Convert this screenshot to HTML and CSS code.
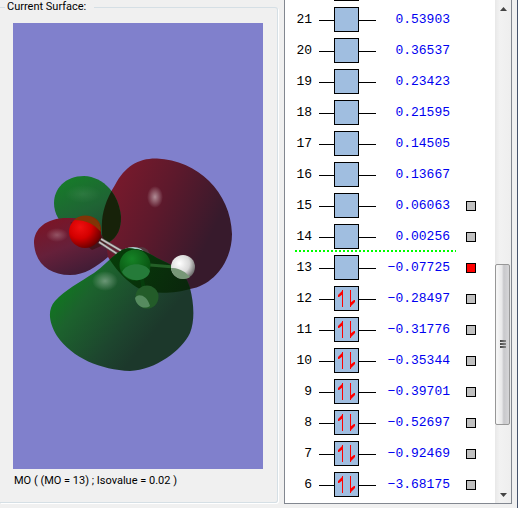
FILE: index.html
```html
<!DOCTYPE html>
<html lang="en">
<head>
    <meta charset="UTF-8">
    <meta name="viewport" content="width=device-width, initial-scale=1.0">
    <title>MO Editor</title>
    <link rel="stylesheet" href="styles.css">
</head>
<body>
    <svg class="defs" width="0" height="0" aria-hidden="true">
        <symbol id="empty" viewBox="0 0 57 25">
            <path d="M0 13.5H15M40 13.5H57" stroke="#000"/>
            <rect x="15.5" y=".5" width="24" height="24" fill="#a0bee0" stroke="#000"/>
        </symbol>
        <symbol id="filled" viewBox="0 0 57 25">
            <use href="#empty"/>
            <path d="M23.5 4V21M31.5 4V21" stroke="#f00"/>
            <path d="M24 4L19 9V11H20L24 8ZM31 21L36 16V14H35L31 17Z" fill="#f00"/>
        </symbol>
    </svg>

    <fieldset class="surface">
        <legend>Current Surface:</legend>
        <svg class="view" viewBox="13 23 250 446" role="img" aria-label="Orbital surface">
            <defs>
                <linearGradient id="bigRed" x1="0" y1="0" x2="1" y2=".5">
                    <stop offset="0" stop-color="#821a2c"/>
                    <stop offset=".5" stop-color="#5d192c"/>
                    <stop offset=".9" stop-color="#371a2c"/>
                </linearGradient>
                <linearGradient id="smallRed" x1=".2" y1="0" x2=".7" y2="1">
                    <stop offset="0" stop-color="#7c1425"/>
                    <stop offset=".5" stop-color="#66203a"/>
                    <stop offset="1" stop-color="#3d1c35"/>
                </linearGradient>
                <linearGradient id="smallGreen" x1=".2" y1="0" x2=".7" y2="1">
                    <stop offset="0" stop-color="#167c29"/>
                    <stop offset=".5" stop-color="#1f6434"/>
                    <stop offset="1" stop-color="#204631"/>
                </linearGradient>
                <linearGradient id="bigGreen" x1=".1" y1=".2" x2=".75" y2=".65">
                    <stop offset="0" stop-color="#0d7c1c"/>
                    <stop offset=".3" stop-color="#1c622d"/>
                    <stop offset=".75" stop-color="#1d452e"/>
                    <stop offset="1" stop-color="#1c382b"/>
                </linearGradient>
                <linearGradient id="overlap" x1="0" y1="0" x2="1" y2=".5">
                    <stop offset="0" stop-color="#007000"/>
                    <stop offset=".35" stop-color="#063d08"/>
                    <stop offset="1" stop-color="#0b220d"/>
                </linearGradient>
                <radialGradient id="oxygen" cx=".35" cy=".35" r=".7">
                    <stop offset="0" stop-color="#f01010"/>
                    <stop offset=".5" stop-color="#d40000"/>
                    <stop offset="1" stop-color="#680000"/>
                </radialGradient>
                <radialGradient id="hydrogen" cx=".35" cy=".35" r=".7">
                    <stop offset="0" stop-color="#fff"/>
                    <stop offset=".6" stop-color="#d8d8d8"/>
                    <stop offset="1" stop-color="#6c6c6c"/>
                </radialGradient>
                <radialGradient id="carbon" cx=".4" cy=".3" r=".7">
                    <stop offset="0" stop-color="#168326"/>
                    <stop offset="1" stop-color="#075010"/>
                </radialGradient>
                <radialGradient id="shine">
                    <stop offset="0" stop-color="#fff" stop-opacity=".5"/>
                    <stop offset="1" stop-color="#fff" stop-opacity="0"/>
                </radialGradient>
                <path id="redLobe" d="M157 158.500C139 158 125 166 115 185C105 201 101 216 102 230C102 242 104 251 108 257C118 273 134 290 150 292C165 294 180 292 190 289C214 285 232 261 232 234C231 192 197 160 157 158.500Z"/>
                <path id="greenSmallLobe" d="M84 176C65 176 54 189 54 203C54 214 60 223 70 232C82 241 96 249 108 243C118 237 121 228 121 217C119 194 104 177 84 176Z"/>
                <path id="redSmallLobe" d="M70 218C47 217 34 228 34 243C35 263 49 275 70 275C85 275 96 267 108 257C107 246 103 232 92 224C84 219 77 218 70 218Z"/>
                <path id="greenLobe" d="M122 250C112 256 105 265 94 273C80 282 65 290 55 301C47 310 49 323 57 336C72 358 101 370 130 371C156 370 182 350 190 333C195 320 194 304 190 288C187 276 178 267 157 258C147 252 140 249 135 249C130 248 126 248 122 250Z"/>
                <clipPath id="inRed"><use href="#redLobe"/></clipPath>
                <clipPath id="inSmallRed"><use href="#redSmallLobe"/></clipPath>
            </defs>
            <rect x="13" y="23" width="250" height="446" fill="#8080cc"/>

            <!-- upper lobes -->
            <use href="#redLobe" fill="url(#bigRed)"/>
            <ellipse cx="155" cy="197" rx="8" ry="11" fill="url(#shine)"/>
            <use href="#greenSmallLobe" fill="url(#smallGreen)"/>
            <use href="#greenSmallLobe" fill="#172209" clip-path="url(#inRed)"/>
            <ellipse cx="83" cy="194" rx="18" ry="9" fill="url(#shine)" opacity=".15"/>
            <use href="#redSmallLobe" fill="url(#smallRed)"/>
            <ellipse cx="57" cy="235" rx="11" ry="7" fill="url(#shine)" opacity=".5"/>
            <g clip-path="url(#inSmallRed)">
                <path d="M84 218L121 218L118 234L108 243L92 250L70 232Z" fill="#3a1010" opacity=".7"/>
            </g>
            <circle cx="88" cy="229" r="13" fill="#773407"/>
            <path d="M70 223C86 218 103 233 106 249C100 240 96 231 88 227Z" fill="#500b08"/>
            <circle cx="85" cy="232" r="16" fill="url(#oxygen)"/>
            <path d="M74 220A16 16 0 0 1 101 232C94 224 86 220 74 220Z" fill="#813406"/>

            <!-- bond to the ring atom -->
            <path d="M101 239L125 253M99 242L122 257" stroke="#555" stroke-width="3"/>
            <path d="M101 239L125 253M99 242L122 257" stroke="#c8c0c0" stroke-width="1.500"/>
            <circle cx="141" cy="256" r="9" fill="#54393f"/>
            <ellipse cx="133" cy="253" rx="11" ry="6" fill="#a8c8c8"/>

            <!-- lower lobe -->
            <use href="#greenLobe" fill="url(#bigGreen)"/>
            <use href="#greenLobe" fill="url(#overlap)" clip-path="url(#inRed)"/>
            <ellipse cx="105" cy="281" rx="13" ry="10" fill="url(#shine)" opacity=".7"/>

            <path d="M150 265L174 267" stroke="#245f27" stroke-width="3"/>
            <path d="M142 279L144 291" stroke="#063d0c" stroke-width="4"/>
            <circle cx="147" cy="297" r="11.500" fill="#235c29"/>
            <path d="M135 298C137 293 147 294 150 306C144 310 136 306 135 298Z" fill="#568b5f"/>
            <circle cx="135" cy="265" r="15.500" fill="url(#carbon)"/>
            <path d="M122 272C127 262 145 262 150 271C148 282 129 284 122 272Z" fill="#257b39"/>
            <circle cx="183" cy="267" r="12" fill="url(#hydrogen)"/>
            <path d="M171 268C179 267 187 273 190 277C182 282 172 277 171 268Z" fill="#779777"/>
        </svg>
        <p class="caption">MO ( (MO = 13) ; Isovalue = 0.02 )</p>
    </fieldset>

    <div class="orbitals">
        <div class="list">
            <table>
                <tr><th></th><td class="level"><svg><use href="#empty"/></svg></td><td></td><td></td></tr>
                <tr><th>21</th><td class="level"><svg><use href="#empty"/></svg></td><td class="energy">0.53903</td><td></td></tr>
                <tr><th>20</th><td class="level"><svg><use href="#empty"/></svg></td><td class="energy">0.36537</td><td></td></tr>
                <tr><th>19</th><td class="level"><svg><use href="#empty"/></svg></td><td class="energy">0.23423</td><td></td></tr>
                <tr><th>18</th><td class="level"><svg><use href="#empty"/></svg></td><td class="energy">0.21595</td><td></td></tr>
                <tr><th>17</th><td class="level"><svg><use href="#empty"/></svg></td><td class="energy">0.14505</td><td></td></tr>
                <tr><th>16</th><td class="level"><svg><use href="#empty"/></svg></td><td class="energy">0.13667</td><td></td></tr>
                <tr><th>15</th><td class="level"><svg><use href="#empty"/></svg></td><td class="energy">0.06063</td><td class="mark"><input type="radio" name="mo" value="15" aria-label="MO 15"></td></tr>
                <tr class="gap"><th>14</th><td class="level"><svg><use href="#empty"/></svg></td><td class="energy">0.00256</td><td class="mark"><input type="radio" name="mo" value="14" aria-label="MO 14"></td></tr>
                <tr><th>13</th><td class="level"><svg><use href="#empty"/></svg></td><td class="energy">−0.07725</td><td class="mark"><input type="radio" name="mo" value="13" aria-label="MO 13" checked></td></tr>
                <tr><th>12</th><td class="level"><svg><use href="#filled"/></svg></td><td class="energy">−0.28497</td><td class="mark"><input type="radio" name="mo" value="12" aria-label="MO 12"></td></tr>
                <tr><th>11</th><td class="level"><svg><use href="#filled"/></svg></td><td class="energy">−0.31776</td><td class="mark"><input type="radio" name="mo" value="11" aria-label="MO 11"></td></tr>
                <tr><th>10</th><td class="level"><svg><use href="#filled"/></svg></td><td class="energy">−0.35344</td><td class="mark"><input type="radio" name="mo" value="10" aria-label="MO 10"></td></tr>
                <tr><th>9</th><td class="level"><svg><use href="#filled"/></svg></td><td class="energy">−0.39701</td><td class="mark"><input type="radio" name="mo" value="9" aria-label="MO 9"></td></tr>
                <tr><th>8</th><td class="level"><svg><use href="#filled"/></svg></td><td class="energy">−0.52697</td><td class="mark"><input type="radio" name="mo" value="8" aria-label="MO 8"></td></tr>
                <tr><th>7</th><td class="level"><svg><use href="#filled"/></svg></td><td class="energy">−0.92469</td><td class="mark"><input type="radio" name="mo" value="7" aria-label="MO 7"></td></tr>
                <tr><th>6</th><td class="level"><svg><use href="#filled"/></svg></td><td class="energy">−3.68175</td><td class="mark"><input type="radio" name="mo" value="6" aria-label="MO 6"></td></tr>
            </table>
        </div>
        <div class="scrollbar">
            <button class="arrow" aria-label="Scroll up"><svg width="7" height="4" viewBox="0 0 7 4"><path d="M0 4L3.500 0L7 4Z" fill="#444"/></svg></button>
            <div class="before"></div>
            <div class="thumb"><i></i><i></i><i></i></div>
            <div class="after"></div>
            <button class="arrow" aria-label="Scroll down"><svg width="7" height="4" viewBox="0 0 7 4"><path d="M0 0L3.500 4L7 0Z" fill="#444"/></svg></button>
        </div>
    </div>
</body>
</html>
```
FILE: styles.css
```css
* {
    box-sizing: border-box;
}

body {
    margin: 0;
    height: 100vh;
    display: flex;
    overflow: hidden;
    background: #f0f0f0;
    border-right: 1px solid #46536b;
    font-family: Roboto, "Liberation Sans", Arial, sans-serif;
    font-size: 11px;
    color: #000;
}

.defs {
    position: absolute;
}

/* left: surface preview */
.surface {
    flex: 1;
    min-width: 0;
    display: flex;
    flex-direction: column;
    margin: 0 6px 5px 0;
    padding: 9px 14px 14px 13px;
    border: 1px solid #d5dfe5;
    border-left: 0;
    border-radius: 0 3px 3px 0;
    box-shadow: 1px 1px 0 #fff;
}

legend {
    margin-left: -8px;
    padding: 0 8px 0 2px;
    line-height: 14px;
}

.view {
    display: block;
    width: 100%;
    flex: 1;
    min-height: 0;
    background: #8080cc;
}

.caption {
    margin: 5px 0 0 1px;
    line-height: 14px;
}

/* right: orbital list */
.orbitals {
    display: flex;
    width: 228px;
    margin: 0 5px 4px 0;
    background: #fff;
    border: 1px solid #828790;
    border-top: 0;
}

.list {
    flex: 1;
    display: flex;
    flex-direction: column;
    justify-content: flex-end;
    overflow: hidden;
    padding: 0 0 3px 10px;
}

table {
    border-collapse: collapse;
    font-family: "Liberation Mono", "Courier New", monospace;
    font-size: 13px;
    line-height: 16px;
    width: 181px;
    table-layout: fixed;
}

tr {
    height: 31px;
}

th,
td {
    padding: 0;
    vertical-align: middle;
}

th {
    width: 17px;
    font-weight: 400;
    text-align: right;
}

.level {
    width: 64px;
    padding-left: 7px;
}

.level svg {
    display: block;
    width: 57px;
    height: 25px;
}

.energy {
    color: #0000f0;
    text-align: right;
}

td:last-child {
    width: 26px;
}

.mark input {
    display: block;
    appearance: none;
    width: 10px;
    height: 10px;
    margin: 0 0 0 auto;
    border: 1px solid #000;
    background: #c0c0c0;
}

.mark input:checked {
    background: #f00;
}

.gap {
    background: repeating-linear-gradient(90deg, #0f0 0 2px, #fff 2px 4px) left bottom / 161px 2px no-repeat;
}

.scrollbar {
    width: 16px;
    display: flex;
    flex-direction: column;
    background: linear-gradient(90deg, #e8e8e8, #f2f2f2 30%, #eee);
}

.arrow {
    height: 17px;
    padding: 0;
    border: 0;
    background: none;
    display: flex;
    align-items: center;
    justify-content: center;
}

.before {
    flex: 249;
}

.thumb {
    flex: 160;
    display: flex;
    flex-direction: column;
    align-items: center;
    justify-content: center;
    gap: 1px;
    margin-right: 1px;
    border: 1px solid #979797;
    border-radius: 2px;
    background: linear-gradient(90deg, #f5f5f5 10%, #e8e8e9 45%, #c8c8cb 60%, #d6d6d8);
}

.thumb i {
    width: 6px;
    height: 2px;
    background: linear-gradient(90deg, #444, #888);
}

.after {
    flex: 62;
}
```
